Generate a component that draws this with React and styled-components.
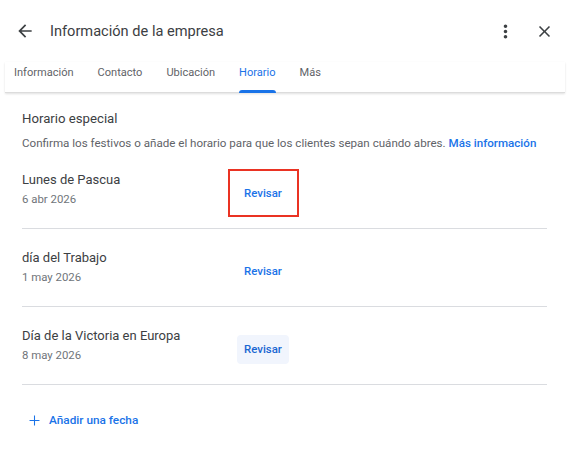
import React from "react";
import styled, { createGlobalStyle } from "styled-components";

const GlobalStyle = createGlobalStyle`
  body {
    margin: 0;
    background: #fff;
    font-family: Roboto, "Noto Sans", Arial, sans-serif;
    color: #3c4043;
  }
`;

const Page = styled.div`
  width: 575px;
  height: 453px;
  background: #fff;
  overflow: hidden;
`;

const Header = styled.div`
  display: flex;
  align-items: center;
  height: 62px;
  padding: 0 21px 0 15px;
  box-sizing: border-box;
`;

const IconButton = styled.button`
  display: flex;
  align-items: center;
  justify-content: center;
  background: none;
  border: none;
  padding: 0;
  width: ${(p) => p.size || 20}px;
  height: ${(p) => p.size || 20}px;
  color: #3c4043;
  margin-left: ${(p) => p.gap || 0}px;
  cursor: pointer;
`;

const Title = styled.h1`
  flex: 1;
  margin: 0 0 0 15px;
  font-size: 14.6px;
  font-weight: 400;
  color: #3c4043;
`;

const TabBar = styled.div`
  display: flex;
  gap: 24px;
  height: 30px;
  padding-left: 9px;
  margin: 0 10px 0 5px;
  border-bottom: 1px solid #dcdcdc;
  box-shadow: 0 1px 2px rgba(0, 0, 0, 0.12);
`;

const Tab = styled.div`
  position: relative;
  font-size: 11.05px;
  line-height: 22px;
  color: ${(p) => (p.active ? "#1a73e8" : "#5f6368")};
  cursor: pointer;

  &::after {
    content: "";
    display: ${(p) => (p.active ? "block" : "none")};
    position: absolute;
    left: 0;
    right: 0;
    bottom: -1px;
    height: 3px;
    border-radius: 3px 3px 0 0;
    background: #1a73e8;
  }
`;

const Content = styled.div`
  padding: 17px 28px 0 22px;
`;

const SectionTitle = styled.div`
  font-size: 13.2px;
  line-height: 18px;
  color: #3c4043;
`;

const Description = styled.div`
  margin-top: 7px;
  font-size: 11.6px;
  line-height: 16px;
  color: #5f6368;
  white-space: nowrap;
`;

const Link = styled.a`
  color: #1a73e8;
  text-decoration: none;
  font-weight: 500;
`;

const Row = styled.div`
  display: flex;
  align-items: center;
  padding: 20px 0 21px;
  border-bottom: 1px solid #dadce0;
`;

const RowText = styled.div`
  width: 215px;
`;

const RowTitle = styled.div`
  font-size: 13px;
  line-height: 18px;
  color: #3c4043;
`;

const RowDate = styled.div`
  margin-top: 2px;
  font-size: 11.4px;
  line-height: 16px;
  color: #70757a;
`;

const ButtonWrap = styled.div`
  position: relative;
  top: 4px;
`;

const ReviewButton = styled.button`
  display: block;
  width: 52px;
  height: 29px;
  border: none;
  border-radius: 4px;
  padding: 0;
  font-family: inherit;
  font-size: 11.4px;
  font-weight: 500;
  color: ${(p) => (p.hover ? "#1967d2" : "#1a73e8")};
  background: ${(p) => (p.hover ? "#f1f5fd" : "transparent")};
  cursor: pointer;
`;

const Highlight = styled.div`
  position: absolute;
  left: -9px;
  top: -10px;
  width: 71px;
  height: 48px;
  box-sizing: border-box;
  border: 2px solid #ea3323;
  pointer-events: none;
`;

const AddButton = styled.button`
  display: flex;
  align-items: center;
  gap: 6px;
  margin: 17px 0 0 0;
  height: 36px;
  padding: 0 0 0 4px;
  background: none;
  border: none;
  font-family: inherit;
  font-size: 11.8px;
  font-weight: 500;
  color: #1a73e8;
  cursor: pointer;
`;

const BackIcon = () => (
  <svg width="20" height="20" viewBox="0 0 24 24" fill="currentColor">
    <path d="M20 11H7.83l5.59-5.59L12 4l-8 8 8 8 1.41-1.41L7.83 13H20v-2z" />
  </svg>
);

const MoreIcon = () => (
  <svg width="21" height="21" viewBox="0 0 24 24" fill="currentColor">
    <path d="M12 8c1.1 0 2-.9 2-2s-.9-2-2-2-2 .9-2 2 .9 2 2 2zm0 2c-1.1 0-2 .9-2 2s.9 2 2 2 2-.9 2-2-.9-2-2-2zm0 6c-1.1 0-2 .9-2 2s.9 2 2 2 2-.9 2-2-.9-2-2-2z" />
  </svg>
);

const CloseIcon = () => (
  <svg width="19" height="19" viewBox="0 0 24 24" fill="currentColor">
    <path d="M19 6.41L17.59 5 12 10.59 6.41 5 5 6.41 10.59 12 5 17.59 6.41 19 12 13.41 17.59 19 19 17.59 13.41 12z" />
  </svg>
);

const PlusIcon = () => (
  <svg width="17" height="17" viewBox="0 0 24 24" fill="currentColor">
    <path d="M19 12.75h-6.25V19h-1.5v-6.25H5v-1.5h6.25V5h1.5v6.25H19v1.5z" />
  </svg>
);

const tabs = ["Información", "Contacto", "Ubicación", "Horario", "Más"];

const holidays = [
  { name: "Lunes de Pascua", date: "6 abr 2026", marked: true },
  { name: "día del Trabajo", date: "1 may 2026" },
  { name: "Día de la Victoria en Europa", date: "8 may 2026", hover: true },
];

export default function App() {
  return (
    <Page>
      <GlobalStyle />
      <Header>
        <IconButton aria-label="Atrás">
          <BackIcon />
        </IconButton>
        <Title>Información de la empresa</Title>
        <IconButton size={21} aria-label="Más opciones">
          <MoreIcon />
        </IconButton>
        <IconButton size={19} gap={19} aria-label="Cerrar">
          <CloseIcon />
        </IconButton>
      </Header>

      <TabBar>
        {tabs.map((t) => (
          <Tab key={t} active={t === "Horario"}>
            {t}
          </Tab>
        ))}
      </TabBar>

      <Content>
        <SectionTitle>Horario especial</SectionTitle>
        <Description>
          Confirma los festivos o añade el horario para que los clientes sepan
          cuándo abres. <Link href="#">Más información</Link>
        </Description>

        {holidays.map((h) => (
          <Row key={h.name}>
            <RowText>
              <RowTitle>{h.name}</RowTitle>
              <RowDate>{h.date}</RowDate>
            </RowText>
            <ButtonWrap>
              <ReviewButton hover={h.hover}>Revisar</ReviewButton>
              {h.marked && <Highlight />}
            </ButtonWrap>
          </Row>
        ))}

        <AddButton>
          <PlusIcon />
          Añadir una fecha
        </AddButton>
      </Content>
    </Page>
  );
}
